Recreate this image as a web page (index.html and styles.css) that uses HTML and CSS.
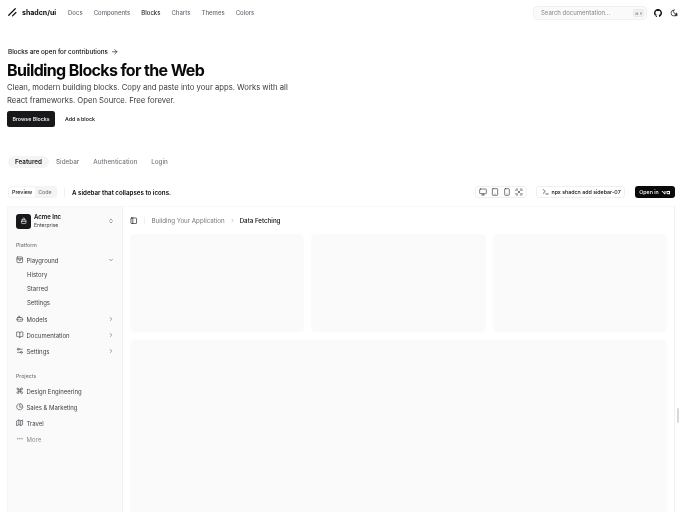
FILE: index.html
```html
<!DOCTYPE html>
<html lang="en">
<head>
  <meta charset="UTF-8">
  <title>Building Blocks for the Web - shadcn/ui</title>
  <meta name="viewport" content="width=device-width, initial-scale=1">
  <link rel="stylesheet" href="styles.css">
</head>
<body>

<svg class="defs" width="0" height="0">
  <symbol id="i-right" viewBox="0 0 24 24"><path d="m9 18 6-6-6-6"/></symbol>
  <symbol id="i-down" viewBox="0 0 24 24"><path d="m6 9 6 6 6-6"/></symbol>
</svg>

<!-- Top bar -->
<header class="topbar">
  <a class="brand" href="#">
    <svg class="brand-logo" viewBox="0 0 256 256"><path d="M208 128l-80 80M192 40L40 192"/></svg>
    shadcn/ui
  </a>
  <nav class="topnav">
    <a href="#">Docs</a>
    <a href="#">Components</a>
    <a href="#" class="current">Blocks</a>
    <a href="#">Charts</a>
    <a href="#">Themes</a>
    <a href="#">Colors</a>
  </nav>
  <div class="search">
    <span>Search documentation...</span>
    <kbd>⌘ k</kbd>
  </div>
  <svg class="github" viewBox="0 0 24 24"><path d="M12 .297c-6.63 0-12 5.373-12 12 0 5.303 3.438 9.8 8.205 11.385.6.113.82-.258.82-.577 0-.285-.01-1.04-.015-2.04-3.338.724-4.042-1.61-4.042-1.61C4.422 18.07 3.633 17.7 3.633 17.7c-1.087-.744.084-.729.084-.729 1.205.084 1.838 1.236 1.838 1.236 1.07 1.835 2.809 1.305 3.495.998.108-.776.417-1.305.76-1.605-2.665-.3-5.466-1.332-5.466-5.93 0-1.31.465-2.38 1.235-3.22-.135-.303-.54-1.523.105-3.176 0 0 1.005-.322 3.3 1.23.96-.267 1.98-.399 3-.405 1.02.006 2.04.138 3 .405 2.28-1.552 3.285-1.23 3.285-1.23.645 1.653.24 2.873.12 3.176.765.84 1.23 1.91 1.23 3.22 0 4.61-2.805 5.625-5.475 5.92.42.36.81 1.096.81 2.22 0 1.606-.015 2.896-.015 3.286 0 .315.21.69.825.57C20.565 22.092 24 17.592 24 12.297c0-6.627-5.373-12-12-12"/></svg>
  <svg class="icon moon" viewBox="0 0 24 24"><path d="M12 3a6 6 0 0 0 9 9 9 9 0 1 1-9-9Z"/><circle cx="18" cy="18" r="3"/></svg>
</header>

<!-- Hero -->
<section class="hero">
  <a class="notice" href="#">Blocks are open for contributions
    <svg class="icon" viewBox="0 0 24 24"><path d="M5 12h14M12 5l7 7-7 7"/></svg>
  </a>
  <h1>Building Blocks for the Web</h1>
  <p>Clean, modern building blocks. Copy and paste into your apps. Works with all React frameworks. Open Source. Free forever.</p>
  <div class="hero-actions">
    <a class="btn-dark" href="#">Browse Blocks</a>
    <a class="btn-link" href="#">Add a block</a>
  </div>
</section>

<!-- Category tabs -->
<nav class="tabs">
  <a href="#" class="active">Featured</a>
  <a href="#">Sidebar</a>
  <a href="#">Authentication</a>
  <a href="#">Login</a>
</nav>

<!-- Block toolbar -->
<div class="toolbar">
  <div class="switch">
    <span class="on">Preview</span>
    <span>Code</span>
  </div>
  <span class="sep"></span>
  <span class="block-title">A sidebar that collapses to icons.</span>
  <div class="devices">
    <svg class="icon" viewBox="0 0 24 24"><rect x="2" y="3" width="20" height="14" rx="2"/><path d="M8 21h8M12 17v4"/></svg>
    <svg class="icon" viewBox="0 0 24 24"><rect x="4" y="2" width="16" height="20" rx="2"/><path d="M12 18h.01"/></svg>
    <svg class="icon" viewBox="0 0 24 24"><rect x="5" y="2" width="14" height="20" rx="2"/><path d="M12 18h.01"/></svg>
    <svg class="icon" viewBox="0 0 24 24"><path d="M8 3H5a2 2 0 0 0-2 2v3M21 8V5a2 2 0 0 0-2-2h-3M3 16v3a2 2 0 0 0 2 2h3M16 21h3a2 2 0 0 0 2-2v-3"/><path d="m8 8 8 8M16 8l-8 8"/></svg>
  </div>
  <div class="command">
    <svg class="icon" viewBox="0 0 24 24"><path d="m4 17 6-6-6-6M12 19h8"/></svg>
    npx shadcn add sidebar-07
  </div>
  <a class="open-in" href="#">Open in
    <svg viewBox="0 0 40 20"><path d="M2 4h5l7 9V4h4v13h-4L2 4zM22 4h14v13H26l-4-4V4zm4 4v4l1 1h5V8h-6z" fill-rule="evenodd"/></svg>
  </a>
</div>

<!-- Block preview -->
<div class="frame">
  <span class="grip"></span>
  <aside class="sidebar">
    <div class="team">
      <span class="team-logo">
        <svg class="icon" viewBox="0 0 24 24"><rect x="5" y="9" width="14" height="12" rx="2"/><path d="M9 9V6a3 3 0 0 1 6 0v3M5 14h14"/></svg>
      </span>
      <div class="team-text">
        <strong>Acme Inc</strong>
        <small>Enterprise</small>
      </div>
      <svg class="icon updown" viewBox="0 0 24 24"><path d="m7 15 5 5 5-5M7 9l5-5 5 5"/></svg>
    </div>

    <div class="group-label first">Platform</div>
    <a class="item" href="#">
      <svg class="icon" viewBox="0 0 24 24"><rect x="3" y="3" width="18" height="18" rx="2"/><path d="M3 9h18M9 9v3a3 3 0 0 0 6 0V9"/></svg>
      Playground
      <svg class="icon chev"><use href="#i-down"/></svg>
    </a>
    <div class="subitems">
      <a href="#">History</a>
      <a href="#">Starred</a>
      <a href="#">Settings</a>
    </div>
    <a class="item" href="#">
      <svg class="icon" viewBox="0 0 24 24"><path d="M12 8V4H8"/><rect x="4" y="8" width="16" height="12" rx="2"/><path d="M2 14h2M20 14h2M15 13v2M9 13v2"/></svg>
      Models
      <svg class="icon chev"><use href="#i-right"/></svg>
    </a>
    <a class="item" href="#">
      <svg class="icon" viewBox="0 0 24 24"><path d="M12 7v14"/><path d="M3 18a1 1 0 0 1-1-1V4a1 1 0 0 1 1-1h5a4 4 0 0 1 4 4 4 4 0 0 1 4-4h5a1 1 0 0 1 1 1v13a1 1 0 0 1-1 1h-6a3 3 0 0 0-3 3 3 3 0 0 0-3-3z"/></svg>
      Documentation
      <svg class="icon chev"><use href="#i-right"/></svg>
    </a>
    <a class="item" href="#">
      <svg class="icon" viewBox="0 0 24 24"><path d="M20 7h-9M14 17H5"/><circle cx="17" cy="17" r="3"/><circle cx="7" cy="7" r="3"/></svg>
      Settings
      <svg class="icon chev"><use href="#i-right"/></svg>
    </a>

    <div class="group-label second">Projects</div>
    <a class="item" href="#">
      <svg class="icon" viewBox="0 0 24 24"><path d="M15 6v12a3 3 0 1 0 3-3H6a3 3 0 1 0 3 3V6a3 3 0 1 0-3 3h12a3 3 0 1 0-3-3"/></svg>
      Design Engineering
    </a>
    <a class="item" href="#">
      <svg class="icon" viewBox="0 0 24 24"><path d="M21.2 15.9A10 10 0 1 1 8 2.8"/><path d="M22 12A10 10 0 0 0 12 2v10z"/></svg>
      Sales &amp; Marketing
    </a>
    <a class="item" href="#">
      <svg class="icon" viewBox="0 0 24 24"><path d="M3 6l6-3 6 3 6-3v15l-6 3-6-3-6 3zM9 3v15M15 6v15"/></svg>
      Travel
    </a>
    <a class="item muted" href="#">
      <svg class="icon" viewBox="0 0 24 24"><circle cx="12" cy="12" r="1"/><circle cx="19" cy="12" r="1"/><circle cx="5" cy="12" r="1"/></svg>
      More
    </a>
  </aside>

  <main class="inset">
    <div class="crumbs">
      <svg class="icon" viewBox="0 0 24 24"><rect x="3" y="3" width="18" height="18" rx="2"/><path d="M9 3v18"/></svg>
      <span class="vsep"></span>
      <span class="crumb">Building Your Application</span>
      <svg class="icon crumb-chev"><use href="#i-right"/></svg>
      <span class="crumb-now">Data Fetching</span>
    </div>
    <div class="cards">
      <div class="card"></div>
      <div class="card"></div>
      <div class="card"></div>
    </div>
    <div class="card big"></div>
  </main>
</div>

</body>
</html>
```

FILE: styles.css
```css
* { box-sizing: border-box; }
html, body {
  height: 100%;
  overflow: hidden;
}
body {
  margin: 0;
  font-family: Inter, "Liberation Sans", sans-serif;
  font-size: 6px;
  color: #09090b;
  background: #fff;
  filter: blur(0.4px);
}
a { color: inherit; text-decoration: none; }
.defs { position: absolute; }
.icon {
  width: 7.5px; height: 7.5px;
  fill: none;
  stroke: currentColor;
  stroke-width: 2;
  stroke-linecap: round;
  stroke-linejoin: round;
  flex: none;
}

/* top bar */
.topbar {
  height: 25px;
  padding: 0 10px 0 7px;
  display: flex;
  align-items: center;
}
.brand {
  display: flex;
  align-items: center;
  gap: 4px;
  font-weight: 700;
  font-size: 7px;
  width: 61px;
}
.brand-logo {
  width: 11px; height: 11px;
  fill: none;
  stroke: #09090b;
  stroke-width: 28;
  stroke-linecap: round;
}
.topnav {
  display: flex;
  gap: 11px;
  color: #6b6b73;
  font-weight: 500;
  font-size: 6px;
}
.topnav .current { color: #2b2b30; }
.search {
  margin-left: auto;
  width: 114px; height: 14px;
  padding: 0 2px 0 7px;
  display: flex;
  align-items: center;
  justify-content: space-between;
  font-size: 6px;
  color: #85858c;
  background: #fafafa;
  border: 1px solid #f0f0f1;
  border-radius: 4px;
}
.search kbd {
  width: 11px; height: 8px;
  line-height: 7px;
  font-family: inherit;
  font-size: 4px;
  text-align: center;
  background: #f3f3f4;
  border: 1px solid #e8e8ea;
  border-radius: 2px;
}
.github {
  width: 8px; height: 8px;
  margin-left: 7px;
  fill: #09090b;
  flex: none;
}
.moon { margin-left: 8px; width: 8px; height: 8px; }

/* hero */
.hero { padding: 21px 7px 0; }
.notice {
  display: flex;
  align-items: center;
  gap: 3px;
  height: 12px;
  font-size: 6.3px;
  font-weight: 500;
  margin-left: 1px;
}
.hero h1 {
  margin: 2px 0 0;
  font-size: 16px;
  line-height: 20px;
  font-weight: 700;
  letter-spacing: -0.04em;
}
.hero p {
  margin: 1px 0 0;
  width: 288px;
  font-size: 7.7px;
  line-height: 13px;
  color: #3a3a40;
}
.hero-actions {
  margin-top: 4px;
  display: flex;
  align-items: center;
  gap: 10px;
}
.btn-dark {
  width: 48px; height: 16px;
  line-height: 16px;
  text-align: center;
  color: #fafafa;
  background: #18181b;
  border-radius: 2.5px;
  font-size: 5.3px;
  font-weight: 500;
}
.btn-link {
  font-size: 5.3px;
  font-weight: 500;
}

/* tabs */
.tabs {
  margin-top: 29px;
  padding-left: 8px;
  display: flex;
  align-items: center;
  color: #77777e;
  font-size: 6.3px;
  font-weight: 500;
}
.tabs a { line-height: 12px; margin-right: 14px; }
.tabs .active {
  color: #18181b;
  background: #f4f4f5;
  border-radius: 6px;
  padding: 0 7px;
  margin-right: 7px;
  font-weight: 600;
}

/* toolbar */
.toolbar {
  margin: 18px 13px 0 8px;
  height: 12px;
  display: flex;
  align-items: center;
}
.switch {
  width: 49px; height: 12px;
  padding: 1px;
  display: flex;
  background: #f4f4f5;
  border-radius: 3px;
  font-size: 5.3px;
  font-weight: 500;
  color: #77777e;
}
.switch span { padding: 0 3px; line-height: 10px; }
.switch .on {
  color: #18181b;
  background: #fff;
  border-radius: 2px;
}
.sep {
  width: 1px; height: 9px;
  margin: 0 7px;
  background: #f0f0f1;
}
.block-title {
  font-size: 6.2px;
  font-weight: 600;
}
.devices {
  margin-left: auto;
  width: 52px; height: 12px;
  padding: 0 3px;
  display: flex;
  align-items: center;
  justify-content: space-between;
  border: 1px solid #f0f0f1;
  border-radius: 3px;
  color: #3a3a40;
}
.devices .icon { width: 8px; height: 8px; }
.command {
  margin-left: 9px;
  width: 89px; height: 12px;
  padding-left: 5px;
  display: flex;
  align-items: center;
  gap: 2px;
  border: 1px solid #f0f0f1;
  border-radius: 3px;
  font-size: 5.3px;
  font-weight: 500;
  white-space: nowrap;
}
.open-in {
  margin-left: 10px;
  width: 40px; height: 12px;
  display: flex;
  align-items: center;
  justify-content: center;
  gap: 2px;
  color: #fafafa;
  background: #09090b;
  border-radius: 3px;
  font-size: 5.3px;
  font-weight: 500;
}
.open-in svg { width: 10px; height: 5px; fill: #fafafa; }

/* preview frame */
.frame {
  position: relative;
  margin: 8px 13px 0 7px;
  height: 400px;
  display: flex;
  border-right: 1px solid #f0f0f1;
  border-top: 1px solid #f8f8f8;
}
.grip {
  position: absolute;
  right: -5px; top: 201px;
  width: 2px; height: 15px;
  background: #d8d8da;
  border-radius: 1px;
}
.sidebar {
  width: 116px;
  padding: 6px 8px 0;
  flex: none;
  background: #fafafa;
  border-right: 1px solid #f0f0f1;
  border-left: 1px solid #f4f4f5;
}
.team {
  display: flex;
  align-items: center;
  height: 16px;
}
.team-logo {
  width: 15px; height: 15px;
  margin-right: 3px;
  display: flex;
  align-items: center;
  justify-content: center;
  color: #fafafa;
  background: #18181b;
  border-radius: 3px;
}
.team-text { flex: 1; line-height: 8px; }
.team-text strong {
  display: block;
  font-weight: 600;
  font-size: 6px;
}
.team-text small {
  display: block;
  font-size: 5px;
  color: #3a3a40;
}
.updown { width: 6px; height: 6px; color: #3f3f46; }
.group-label {
  height: 9px;
  line-height: 9px;
  font-size: 5.2px;
  color: #77777e;
  font-weight: 500;
}
.group-label.first { margin-top: 12px; }
.group-label.second { margin-top: 13px; }
.item {
  height: 16px;
  display: flex;
  align-items: center;
  gap: 3px;
  font-size: 6px;
  color: #3f3f46;
}
.group-label + .item { margin-top: 2px; }
.item .chev { margin-left: auto; width: 6px; height: 6px; }
.item.muted { color: #8b8b92; }
.subitems {
  padding-left: 11px;
  display: flex;
  flex-direction: column;
}
.subitems a {
  height: 14px;
  line-height: 14px;
  font-size: 6px;
  color: #3f3f46;
}
.subitems a:last-child { margin-bottom: 1px; }

/* inset area */
.inset {
  flex: 1;
  padding: 0 7px 0 7px;
}
.crumbs {
  height: 27px;
  display: flex;
  align-items: center;
}
.vsep {
  width: 1px; height: 7px;
  margin: 0 7px 0 6px;
  background: #f0f0f1;
}
.crumb { font-size: 6.2px; color: #77777e; }
.crumb-chev { width: 5px; height: 5px; margin: 0 5px; color: #77777e; }
.crumb-now { font-size: 6.2px; font-weight: 500; }
.cards {
  display: grid;
  grid-template-columns: repeat(3, 1fr);
  gap: 7px;
}
.card {
  height: 98px;
  background: #fafafa;
  border-radius: 5px;
}
.card.big {
  margin-top: 8px;
  height: 300px;
}
```
